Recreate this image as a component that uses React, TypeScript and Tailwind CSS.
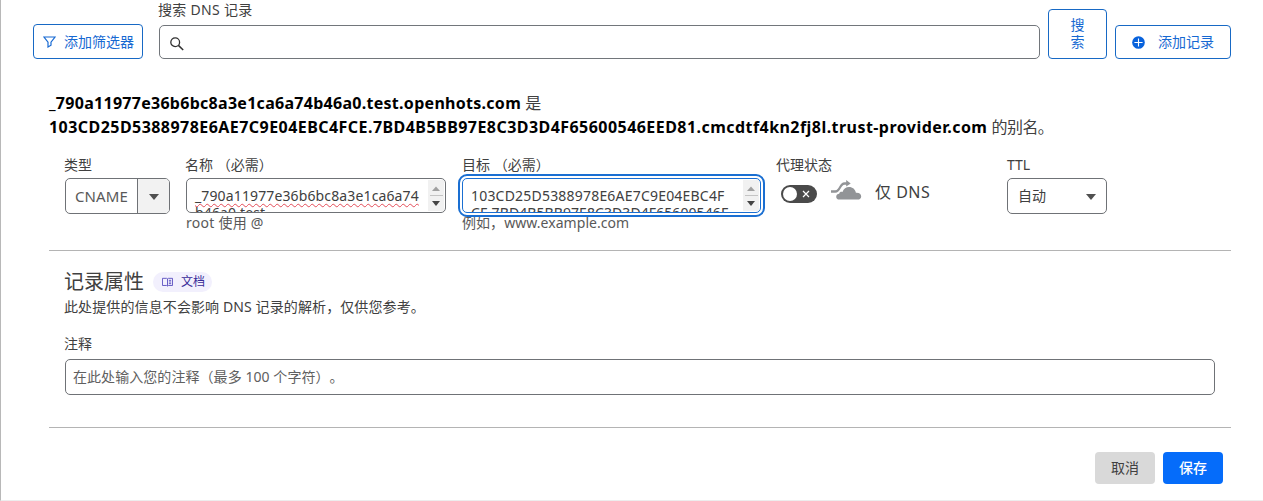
import React from "react";

function Caret({ up = false, className = "" }: { up?: boolean; className?: string }) {
  return (
    <svg viewBox="0 0 10 6" className={className} fill="currentColor" aria-hidden="true">
      <path d={up ? "M0 6 5 0.5 10 6Z" : "M0 0H10L5 6Z"} />
    </svg>
  );
}

function ScrollBar() {
  return (
    <div className="flex h-full w-4 shrink-0 flex-col items-center bg-[#f1f1f1]">
      <div className="flex h-4 w-[13px] items-center justify-center border-b border-[#c4c4c4] pt-0.5">
        <Caret up className="h-[5px] w-2 text-[#a0a0a0]" />
      </div>
      <div className="flex h-4 w-full items-center justify-center">
        <Caret className="h-[5px] w-2 text-[#444]" />
      </div>
    </div>
  );
}

function FilterIcon() {
  return (
    <svg viewBox="0 0 13 12" className="h-3 w-[13px]" fill="none" stroke="currentColor" strokeWidth="1.2" aria-hidden="true">
      <path d="M1 1H12L8 6.2V9.2L5 11V6.2Z" />
    </svg>
  );
}

function SearchIcon() {
  return (
    <svg viewBox="0 0 14 14" className="h-3.5 w-3.5" fill="none" stroke="#313131" strokeWidth="1.3" aria-hidden="true">
      <circle cx="5.2" cy="5.2" r="4.4" />
      <path d="M8.4 8.4 13.2 13" strokeWidth="1.5" />
    </svg>
  );
}

function PlusIcon() {
  return (
    <svg viewBox="0 0 14 14" className="h-[13px] w-[13px]" aria-hidden="true">
      <circle cx="7" cy="7" r="6.8" fill="#0862dc" />
      <path d="M7 2.6V11.4M2.6 7H11.4" stroke="#fff" strokeWidth="1.2" />
    </svg>
  );
}

function BookIcon() {
  return (
    <svg viewBox="0 0 12 10" className="h-2.5 w-[11px]" fill="none" stroke="#5a4fc0" strokeWidth="1" aria-hidden="true">
      <path d="M.5 1H5L6 1.6 7 1H11.5V8.8H7L6 9.4 5 8.8H.5ZM6 1.6V9.2M7.5 3.2H10M7.5 5H10M7.5 6.8H10" />
    </svg>
  );
}

function CloudIcon() {
  return (
    <svg viewBox="0 0 31 20" className="h-5 w-[31px]" fill="#929497" aria-hidden="true">
      <path d="M0 10.2H4.2C8.4 10.2 8.2 2.2 13.8 2.2H15.2V0L19.7 3.4 15.2 6.6V4.8H13.8C9.8 4.8 9.5 12.8 4.2 12.8H0Z" />
      <path d="M8.3 19.6C6.4 19.6 5.2 18.3 5.2 16.7 5.2 14.8 6.6 13.8 8.2 13.7 8.5 12 10.2 11.4 11.5 12 12.6 8.8 15.1 7.1 18 7.1 21.6 7.1 24.3 9.5 24.9 12.7 28.3 12.4 30.2 14.2 30.2 16.4 30.2 18.4 28.7 19.6 26.6 19.6Z" />
    </svg>
  );
}

const label = "-ml-px h-5 whitespace-nowrap text-sm leading-5 text-[#404040]";
const outline = "flex items-center rounded-[4px] border border-[#1769c5] text-sm text-[#1769d2]";

export default function App() {
  return (
    <main className="h-[501px] w-full overflow-hidden border-b border-l border-b-[#ededed] border-l-[#b8b8b8] bg-white font-['Noto_Sans','Noto_Sans_CJK_SC',sans-serif] text-[#404040] [text-spacing-trim:space-all]">
      <header className="ml-8 flex h-[59px] w-[1198px] items-end">
        <button className={`${outline} h-[35px] w-[110px] gap-2 pl-[9px]`}>
          <FilterIcon />
          <span className="whitespace-nowrap">添加筛选器</span>
        </button>
        <div className="ml-4 w-[881px]">
          <label className="-ml-px block h-[25px] text-sm leading-5 tracking-[0.3px]">搜索 DNS 记录</label>
          <div className="flex h-[34px] items-center rounded-[5px] border border-[#72767b] pt-[3px] pl-[10px]">
            <SearchIcon />
          </div>
        </div>
        <button className={`${outline} ml-2 h-[50px] w-[59px] justify-center pb-0.5 leading-[17px]`}>
          <span className="w-[15px]">搜索</span>
        </button>
        <button className={`${outline} ml-2 h-[34px] w-[116px] gap-[13px] pl-4`}>
          <PlusIcon />
          <span className="whitespace-nowrap">添加记录</span>
        </button>
      </header>

      <section className="mt-8 ml-12 w-[1182px]">
        <p className="text-base leading-6 whitespace-nowrap">
          <strong className="tracking-[0.28px] text-black">_790a11977e36b6bc8a3e1ca6a74b46a0.test.openhots.com</strong> 是
          <br />
          <strong className="tracking-[0.45px] text-black">103CD25D5388978E6AE7C9E04EBC4FCE.7BD4B5BB97E8C3D3D4F65600546EED81.cmcdtf4kn2fj8l.trust-provider.com</strong> <span className="tracking-[-0.6px]">的别名。</span>
        </p>

        <div className="flex h-28 border-b border-[#b4b4b4] px-4 pt-4">
          <div className="w-[105px]">
            <div className={label}>类型</div>
            <div className="mt-[3px] flex h-9 overflow-hidden rounded-[5px] border border-[#6f7276]">
              <span className="flex flex-1 items-center pl-[9px] text-[15px] tracking-[0.1px] text-[#595959]">CNAME</span>
              <span className="flex w-8 items-center justify-center border-l border-[#6f7276] bg-[#f2f2f2] pt-0.5">
                <Caret className="h-1.5 w-2.5 text-[#505050]" />
              </span>
            </div>
          </div>

          <div className="ml-4 w-[260px]">
            <div className={label}>名称 （必需）</div>
            <div className="mt-[3px] flex h-[35px] overflow-hidden rounded-[5px] border border-[#6f7276] py-px pr-px">
              <div className="min-w-0 flex-1 pt-[7px] pl-2 text-sm leading-[17px] tracking-[0.13px] whitespace-nowrap">
                <span className="underline decoration-[#e34c58] decoration-wavy decoration-1 underline-offset-2">_790a11977e36b6bc8a3e1ca6a74</span>
                <br />
                b46a0.test
              </div>
              <ScrollBar />
            </div>
            <div className="text-sm leading-5 tracking-[0.25px] text-[#595959]">root 使用 @</div>
          </div>

          <div className="ml-4 w-[299px]">
            <div className={`${label} pl-px`}>目标 （必需）</div>
            <div className="mt-[3px] flex h-[35px] overflow-hidden rounded-[5px] border border-[#1a6fd2] py-px pr-px outline-2 outline-offset-2 outline-[#1a6fd2]">
              <div className="min-w-0 flex-1 pt-[7px] pl-2 text-sm leading-[17px] tracking-[0.2px] whitespace-nowrap">
                103CD25D5388978E6AE7C9E04EBC4F
                <br />
                <span className="tracking-[0.08px]">CE.7BD4B5BB97E8C3D3D4F65600546E</span>
              </div>
              <ScrollBar />
            </div>
            <div className="text-sm leading-5 tracking-[0.05px] text-[#595959]">例如，www.example.com</div>
          </div>

          <div className="ml-4 w-[214px]">
            <div className={label}>代理状态</div>
            <div className="mt-[3px] flex h-7 items-center pl-1">
              <div className="mt-1 flex h-[18px] w-9 items-center justify-between rounded-full bg-[#4a4a4a] pr-[7px] pl-0.5">
                <span className="h-3.5 w-3.5 rounded-full bg-white" />
                <svg viewBox="0 0 8 8" className="h-2 w-2" stroke="#fff" strokeWidth="1.2" aria-hidden="true">
                  <path d="M1 1 7 7M7 1 1 7" />
                </svg>
              </div>
              <span className="-mt-1 ml-[14px]"><CloudIcon /></span>
              <span className="ml-[13px] text-base tracking-[0.5px]">仅 DNS</span>
            </div>
          </div>

          <div className="ml-[16px] w-[100px]">
            <div className={`${label} pl-px`}>TTL</div>
            <div className="mt-[3px] flex h-9 items-center justify-between rounded-[5px] border border-[#6f7276] pr-[10px] pl-[10px] text-sm">
              自动
              <Caret className="mt-0.5 h-1.5 w-2.5 text-[#505050]" />
            </div>
          </div>
        </div>

        <div className="h-[177px] border-b border-[#b4b4b4] px-4 pt-4">
          <div className="-ml-px flex h-[30px] items-center">
            <h2 className="text-xl font-normal">记录属性</h2>
            <span className="ml-[9px] flex h-5 w-[59px] items-center gap-2 rounded-full bg-[#f2f0fd] pl-[9px] text-xs text-[#382b98]">
              <BookIcon />文档
            </span>
          </div>
          <p className="-ml-px text-sm leading-5 tracking-[0.11px]">此处提供的信息不会影响 DNS 记录的解析，仅供您参考。</p>
          <div className="mt-[17px] -ml-px text-sm leading-5">注释</div>
          <div className="mt-[5px] flex h-9 items-center rounded-[5px] border border-[#6f7276] px-[7px] text-sm tracking-[0.06px] text-[#606060]">在此处输入您的注释（最多 100 个字符）。</div>
        </div>

        <footer className="flex justify-end gap-2 pt-6 pr-2 text-sm">
          <button className="h-8 w-[60px] rounded-[4px] bg-[#d9d9d9]">取消</button>
          <button className="h-8 w-[60px] rounded-[4px] bg-[#056cfa] font-medium text-white">保存</button>
        </footer>
      </section>
    </main>
  );
}
